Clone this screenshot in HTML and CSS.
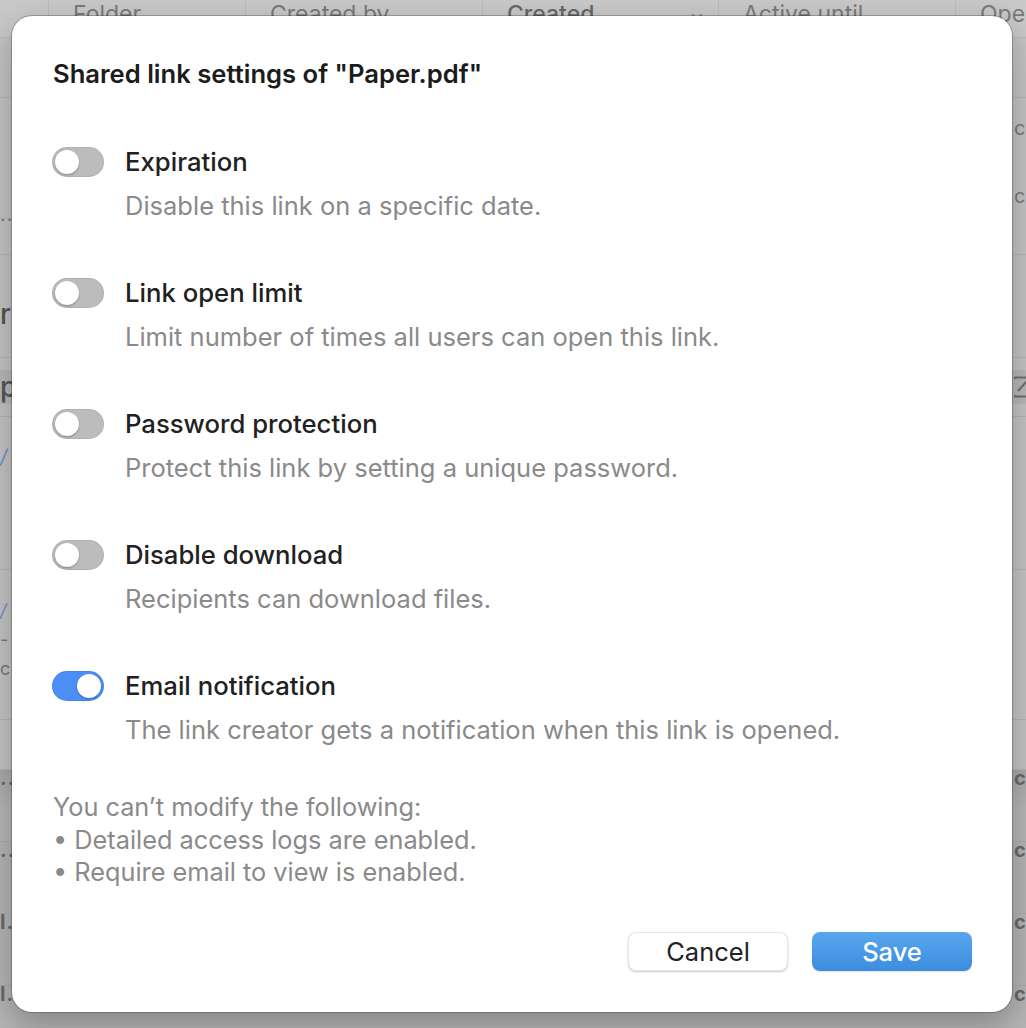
FILE: index.html
```html
<!DOCTYPE html>
<html lang="en">
<head>
<meta charset="utf-8">
<title>Shared link settings</title>
<link rel="stylesheet" href="styles.css">
</head>
<body>
<div class="app">
  <div class="thead">
    <div class="th"></div>
    <div class="th">Folder</div>
    <div class="th">Created by</div>
    <div class="th th-sorted"><span>Created</span><span class="chev">&#8964;</span></div>
    <div class="th">Active until</div>
    <div class="th">Open</div>
  </div>
  <div class="rows">
    <div class="row r1"><span class="lf"></span><span class="rf"></span></div>
    <div class="row r2"><span class="lf dots">...</span><span class="rf rf-stack"><span>c</span><span>c</span></span></div>
    <div class="row r3"><span class="lf big">r</span><span class="rf"></span></div>
    <div class="row r4"><span class="lf big">p</span><span class="rf"><svg class="ext" width="20" height="22" viewBox="0 0 20 22"><rect x="1" y="1.5" width="18" height="19" rx="3" fill="none" stroke="#707070" stroke-width="2"/><path d="M6 15 L15 5" stroke="#707070" stroke-width="2"/></svg></span></div>
    <div class="row r5"><span class="lf blue">/</span><span class="rf"></span></div>
    <div class="row r6"><span class="lf lf-stack"><span class="blue">/</span><span>-</span><span>c</span></span><span class="rf"></span></div>
    <div class="row r7"><span class="lf"></span><span class="rf"></span></div>
    <div class="row dark"><span class="lf dots">...</span><span class="rf">c</span></div>
    <div class="row dark2"><span class="lf dots">...</span><span class="rf">c</span></div>
    <div class="row dark2"><span class="lf dots">l..</span><span class="rf">c</span></div>
    <div class="row dark2"><span class="lf dots">l..</span><span class="rf">c</span></div>
  </div>

  <div class="dialog">
    <h1 class="title">Shared link settings of "Paper.pdf"</h1>
    <div class="settings">
      <div class="setting">
        <span class="toggle"><span class="knob"></span></span>
        <div class="label">Expiration</div>
        <div class="desc">Disable this link on a specific date.</div>
      </div>
      <div class="setting">
        <span class="toggle"><span class="knob"></span></span>
        <div class="label">Link open limit</div>
        <div class="desc">Limit number of times all users can open this link.</div>
      </div>
      <div class="setting">
        <span class="toggle"><span class="knob"></span></span>
        <div class="label">Password protection</div>
        <div class="desc">Protect this link by setting a unique password.</div>
      </div>
      <div class="setting">
        <span class="toggle"><span class="knob"></span></span>
        <div class="label">Disable download</div>
        <div class="desc">Recipients can download files.</div>
      </div>
      <div class="setting">
        <span class="toggle on"><span class="knob"></span></span>
        <div class="label">Email notification</div>
        <div class="desc">The link creator gets a notification when this link is opened.</div>
      </div>
    </div>
    <div class="notes">
      <div>You can’t modify the following:</div>
      <div>• Detailed access logs are enabled.</div>
      <div>• Require email to view is enabled.</div>
    </div>
    <div class="actions">
      <button class="btn btn-cancel">Cancel</button>
      <button class="btn btn-save">Save</button>
    </div>
  </div>
</div>
</body>
</html>
```
FILE: styles.css
```css
* { box-sizing: border-box; }
html, body { margin: 0; padding: 0; }
body {
  font-family: Inter, "Noto Sans", "Liberation Sans", sans-serif;
  width: 1026px;
  height: 1028px;
  overflow: hidden;
}
.app {
  position: relative;
  width: 1026px;
  height: 1028px;
  background: #c4c4c4;
  overflow: hidden;
}
.thead {
  display: grid;
  grid-template-columns: 48px 197px 237px 236px 237px 1fr;
  height: 38px;
  background: #c9c9c9;
  border-bottom: 1px solid #b9b9b9;
}
.th {
  border-left: 1px solid #bdbdbd;
  padding-left: 24px;
  color: #7a7a7a;
  font-size: 23px;
  line-height: 28px;
  white-space: nowrap;
  overflow: hidden;
}
.th:first-child { border-left: none; }
.th-sorted {
  display: flex;
  justify-content: space-between;
  padding-right: 14px;
  color: #686868;
  font-weight: 500;
}
.chev { font-size: 18px; color: #8a8a8a; }
.rows { display: flex; flex-direction: column; }
.row {
  display: flex;
  justify-content: space-between;
  border-bottom: 1px solid #b6b6b6;
  overflow: hidden;
  color: #7a7a7a;
  font-size: 20px;
}
.lf { width: 14px; overflow: hidden; white-space: nowrap; }
.rf { width: 12px; overflow: hidden; white-space: nowrap; }
.r1 { height: 60px; }
.r2 { height: 157px; padding-top: 18px; }
.r2 .lf { padding-top: 86px; }
.rf-stack { display: flex; flex-direction: column; gap: 44px; }
.r3 { height: 103px; align-items: center; padding-top: 16px; }
.big { font-size: 28px; color: #555; font-weight: 500; }
.r4 { height: 59px; align-items: center; background: linear-gradient(#c4c4c4 0 12px, #b9b9b9 12px 46px, #c4c4c4 46px); }
.ext { display: block; margin-left: -2px; }
.r5 { height: 153px; padding-top: 28px; }
.blue { color: #6a8fd0; font-style: italic; }
.r6 { height: 150px; }
.lf-stack { display: flex; flex-direction: column; padding-top: 30px; gap: 8px; font-size: 18px; }
.r7 { height: 50px; }
.dark { height: 72px; background: linear-gradient(#a9a9a9, #b7b7b7 40px); border-bottom-color: #aaaaaa; }
.dark2 { height: 72px; background: #b5b5b5; border-bottom-color: #ababab; }
.dark .lf, .dark2 .lf, .dark .rf, .dark2 .rf { padding-top: 0; line-height: 16px; font-weight: 700; color: #6a6a6a; }
.dots { letter-spacing: 1px; }

.dialog {
  position: absolute;
  left: 12px;
  top: 16px;
  width: 1000px;
  height: 996px;
  background: #ffffff;
  border-radius: 20px;
  box-shadow: 0 0 0 1px rgba(0, 0, 0, 0.22), 0 12px 34px rgba(0, 0, 0, 0.28);
  padding: 42px 40px 41px 40px;
  display: flex;
  flex-direction: column;
}
.title {
  margin: 0 0 0 1px;
  font-size: 25.6px;
  line-height: 32px;
  font-weight: 600;
  color: #1c1c1c;
}
.settings {
  margin-top: 57px;
  display: flex;
  flex-direction: column;
  gap: 58px;
}
.setting {
  display: grid;
  grid-template-columns: 52px 1fr;
  column-gap: 21px;
}
.toggle {
  grid-row: 1;
  grid-column: 1;
  position: relative;
  width: 52px;
  height: 30px;
  border-radius: 15px;
  background: #bcbcbc;
  box-shadow: inset 0 0 0 1px rgba(0, 0, 0, 0.06);
}
.knob {
  position: absolute;
  top: 3px;
  left: 3px;
  width: 24px;
  height: 24px;
  border-radius: 50%;
  background: #ffffff;
  box-shadow: 0 1px 2px rgba(0, 0, 0, 0.3);
}
.toggle.on { background: #4b8ef6; }
.toggle.on .knob { left: auto; right: 3px; }
.label {
  grid-row: 1;
  grid-column: 2;
  font-size: 25.7px;
  line-height: 29px;
  font-weight: 500;
  color: #212121;
}
.desc {
  grid-row: 2;
  grid-column: 2;
  margin-top: 15px;
  font-size: 25.5px;
  line-height: 28px;
  color: #8a8a8a;
}
.notes {
  margin-top: 47px;
  margin-left: 1px;
  font-size: 25.3px;
  line-height: 32.5px;
  color: #8a8a8a;
}
.actions {
  margin-top: auto;
  display: flex;
  justify-content: flex-end;
  gap: 24px;
}
.btn {
  width: 160px;
  height: 39px;
  border-radius: 8px;
  font-family: inherit;
  font-size: 25.5px;
  padding: 0;
  cursor: pointer;
}
.btn-cancel {
  background: #ffffff;
  color: #222222;
  border: 1px solid rgba(0, 0, 0, 0.1);
  box-shadow: 0 1px 2px rgba(0, 0, 0, 0.22);
}
.btn-save {
  background: linear-gradient(#58a6ec, #3d8de0);
  color: #ffffff;
  border: none;
  font-weight: 500;
  box-shadow: 0 1px 1px rgba(0, 0, 0, 0.12);
}
```
